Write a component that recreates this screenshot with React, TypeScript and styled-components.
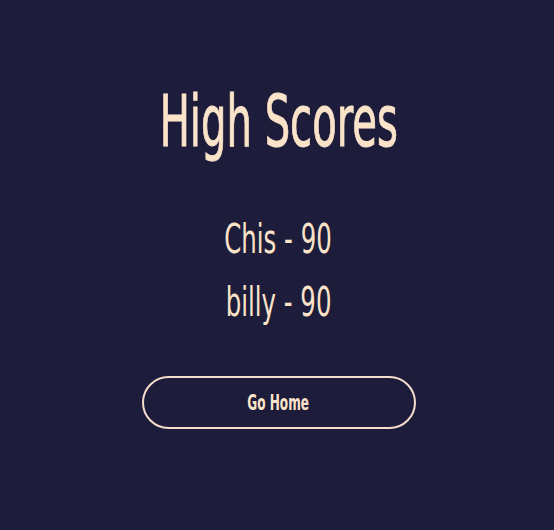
import React from "react";
import styled, { createGlobalStyle } from "styled-components";

const Global = createGlobalStyle`
  html, body { margin: 0; padding: 0; background: #1d1d3b; }
  body { font-family: "DejaVu Sans", sans-serif; }
`;

const Page = styled.main`
  width: 554px;
  height: 530px;
  background: #1d1d3b;
  display: flex;
  flex-direction: column;
  align-items: center;
  box-sizing: border-box;
  padding: 80px 0 0 3px;
  color: #fbe3c9;
`;

const Narrow = styled.span<{ $scale: number }>`
  display: inline-block;
  transform: scaleX(${(p) => p.$scale});
  transform-origin: center;
  white-space: nowrap;
`;

const Title = styled.h1`
  margin: 0;
  font-family: "DejaVu Sans", sans-serif;
  font-weight: 400;
  font-size: 71px;
  line-height: 84px;
  -webkit-text-stroke: 1px #fbe3c9;
`;

const List = styled.ul`
  list-style: none;
  margin: 54px 0 0;
  padding: 0;
  display: flex;
  flex-direction: column;
  align-items: center;
  gap: 20px;
`;

const Item = styled.li`
  font-family: "DejaVu Sans", sans-serif;
  font-size: 40px;
  line-height: 43px;
  font-weight: 400;
`;

const HomeButton = styled.button`
  margin-top: 52px;
  width: 274px;
  height: 53px;
  border: 2px solid #f6dccd;
  border-radius: 27px;
  background: transparent;
  color: #fbe3c9;
  font-family: "DejaVu Sans", sans-serif;
  font-weight: 700;
  font-size: 22px;
  cursor: pointer;
`;

export default function App() {
  const scores = [
    { name: "Chis", score: 90 },
    { name: "billy", score: 90 },
  ];
  return (
    <>
      <Global />
      <Page>
        <Title>
          <Narrow $scale={0.565}>High Scores</Narrow>
        </Title>
        <List>
          {scores.map((s) => (
            <Item key={s.name}>
              <Narrow $scale={0.61}>
                {s.name} - {s.score}
              </Narrow>
            </Item>
          ))}
        </List>
        <HomeButton>
          <Narrow $scale={0.55}>Go Home</Narrow>
        </HomeButton>
      </Page>
    </>
  );
}
